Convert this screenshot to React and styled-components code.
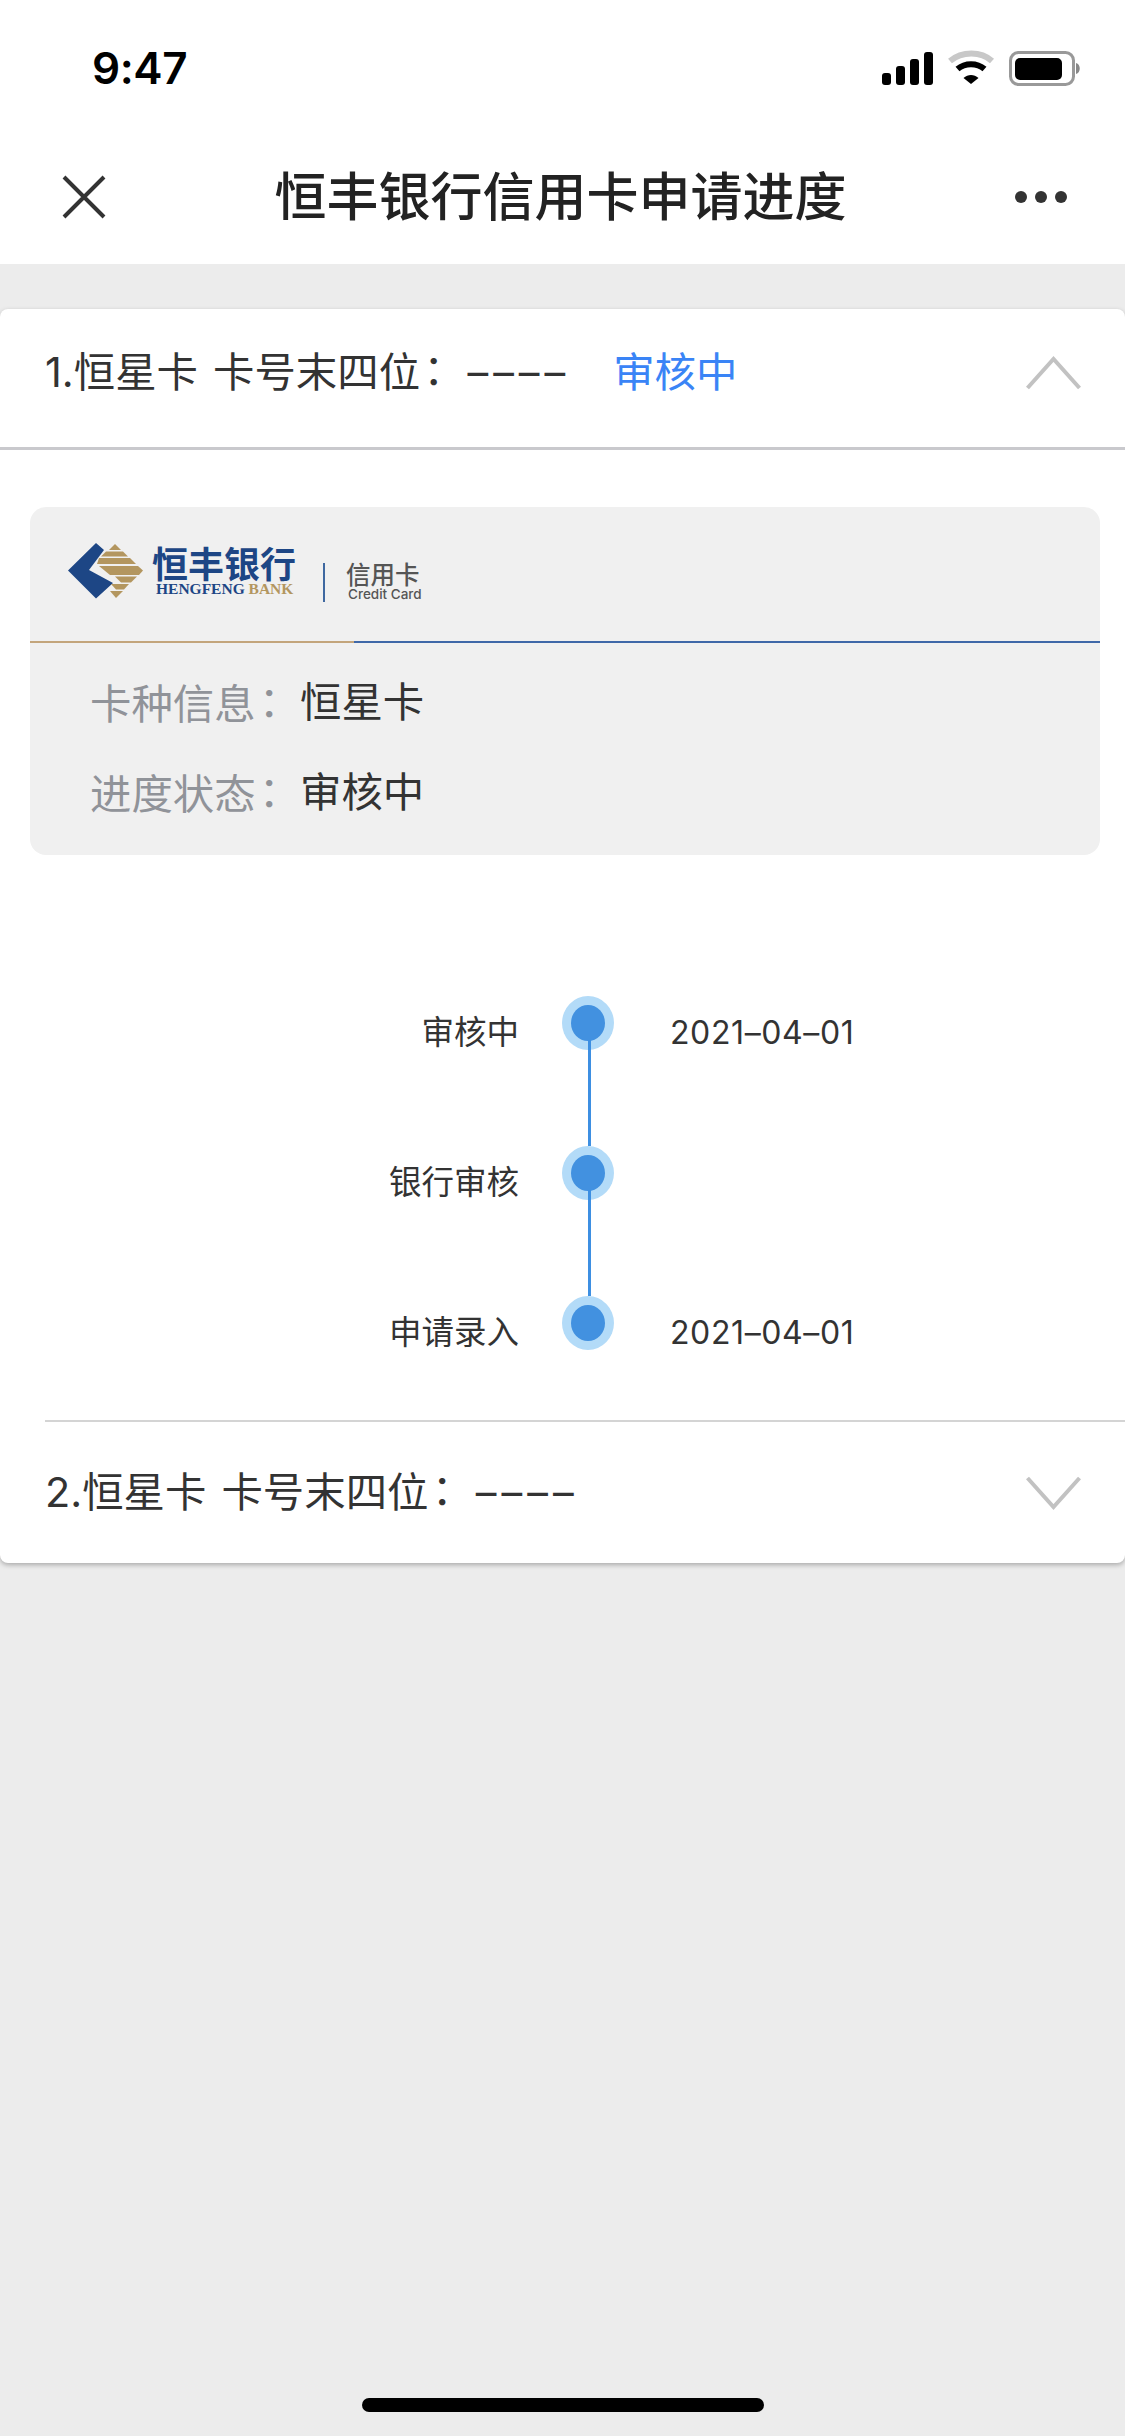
import React from "react";
import styled, { createGlobalStyle } from "styled-components";

const Global = createGlobalStyle`
  html, body { margin: 0; padding: 0; background: #ececec; }
  * { box-sizing: border-box; }
  body { font-family: "Inter", "Noto Sans CJK SC", sans-serif; color: #333; }
`;

const CJK = `"Inter", "Noto Sans CJK SC", sans-serif`;

const Page = styled.div`
  width: 1125px;
  height: 2436px;
  display: flex;
  flex-direction: column;
  background: #ececec;
  overflow: hidden;
`;
const StatusBar = styled.div`
  height: 130px;
  background: #fff;
  display: flex;
  align-items: flex-start;
  justify-content: space-between;
  padding: 42px 43px 0 92px;
`;
const Clock = styled.div`
  font: 600 44px/52px "Inter", sans-serif;
  color: #000;
  letter-spacing: -0.4px;
`;
const StatusIcons = styled.svg`
  width: 200px;
  height: 40px;
  margin-top: 10px;
  overflow: visible;
`;
const NavBar = styled.header`
  height: 134px;
  background: #fff;
  display: grid;
  grid-template-columns: 118px 1fr 122px;
  align-items: center;
  margin-bottom: 45px;
`;
const NavTitle = styled.h1`
  margin: 0;
  padding-top: 2px;
  text-align: center;
  font: 500 52px/64px ${CJK};
  color: #222;
`;
const CloseWrap = styled.div`
  padding-left: 62px;
  display: flex;
`;
const MoreWrap = styled.div`
  display: flex;
  justify-content: flex-end;
  gap: 8px;
  padding-right: 58px;
`;
const MoreDot = styled.span`
  width: 12px;
  height: 12px;
  border-radius: 50%;
  background: #333;
`;
const Panel = styled.section`
  background: #fff;
  border-radius: 8px;
  box-shadow: 0 2px 5px rgba(0, 0, 0, 0.28);
  display: flex;
  flex-direction: column;
`;
const Head = styled.div`
  height: ${(p) => p.$h}px;
  padding: 0 44px ${(p) => (p.$line ? 10 : 0)}px 45px;
  display: flex;
  align-items: center;
  border-bottom: ${(p) => (p.$line ? "3px solid #c9c9cd" : "none")};
`;
const HeadText = styled.div`
  flex: 1;
  padding-bottom: 5px;
  font: 400 41.4px/56px ${CJK};
  color: #333;
  white-space: pre;
  word-spacing: 3.5px;
`;
const Colon = styled.span`
  font-family: "Noto Sans CJK TC", sans-serif;
  margin-left: -7px;
  margin-right: 7px;
`;
const Dashes = styled.span`
  letter-spacing: 5px;
  margin-left: 6px;
`;
const Status = styled.span`
  color: #3a84f6;
  margin-left: 43px;
`;
const Info = styled.div`
  margin: 57px 25px 0 30px;
  height: 348px;
  background: #f0f0f0;
  border-radius: 16px;
  overflow: hidden;
`;
const LogoBand = styled.div`
  height: 134px;
  padding: 36px 0 0 38px;
  display: flex;
  align-items: flex-start;
`;
const LogoMark = styled.svg`
  width: 76px;
  height: 56px;
  flex: none;
`;
const LogoNames = styled.div`
  margin-left: 8px;
  display: flex;
  flex-direction: column;
  margin-top: -1px;
`;
const LogoCn = styled.div`
  font: 700 36px/40px "Noto Sans CJK SC", sans-serif;
  color: #1d4685;
  white-space: nowrap;
`;
const LogoEn = styled.div`
  font: 700 15.5px/14px "Liberation Serif", serif;
  color: #1d4685;
  margin-left: 4px;
  white-space: pre;
`;
const LogoGold = styled.span`
  color: #b3965f;
`;
const LogoBar = styled.div`
  width: 2px;
  height: 39px;
  background: #3f68a0;
  margin: 20px 21px 0 27px;
`;
const LogoSub = styled.div`
  display: flex;
  flex-direction: column;
  margin-top: 17px;
`;
const SubCn = styled.div`
  font: 500 24.5px/28px "Noto Sans CJK SC", sans-serif;
  color: #555;
  white-space: nowrap;
`;
const SubEn = styled.div`
  font: 500 13.5px/13px "Inter", sans-serif;
  color: #555;
  margin-left: 2px;
  white-space: nowrap;
`;
const Rule = styled.div`
  height: 2px;
  background: linear-gradient(to right, #c3a57c 0, #c3a57c 324px, #3f68a8 324px, #3f68a8 100%);
`;
const Facts = styled.div`
  padding: 14px 0 0 60px;
  display: flex;
  flex-direction: column;
`;
const Fact = styled.div`
  height: 90px;
  display: flex;
  align-items: center;
  font: 400 41.4px/56px ${CJK};
`;
const FactLabel = styled.span`
  width: 210px;
  color: #909399;
`;
const FactValue = styled.span`
  color: #333;
`;
const Timeline = styled.div`
  margin-top: 93px;
  margin-bottom: 22px;
  display: flex;
  flex-direction: column;
`;
const Step = styled.div`
  height: 150px;
  display: grid;
  grid-template-columns: 518px 52px 1fr;
  column-gap: 44px;
  align-items: center;
`;
const StepLabel = styled.div`
  text-align: right;
  margin-right: -1px;
  padding-top: 19px;
  font: 400 32.5px/42px ${CJK};
  color: #333;
`;
const Ring = styled.div`
  position: relative;
  width: 52px;
  height: 54px;
  border-radius: 50%;
  background: #b3dbf8;
  display: flex;
  align-items: center;
  justify-content: center;
`;
const Core = styled.div`
  width: 34px;
  height: 36px;
  border-radius: 50%;
  background: #4291e0;
`;
const Connector = styled.div`
  position: absolute;
  left: 26px;
  top: 44px;
  width: 3px;
  height: 106px;
  background: #3d8fe2;
`;
const StepDate = styled.div`
  margin-left: 12px;
  padding-top: 19px;
  font: 400 32px/42px "Inter", sans-serif;
  letter-spacing: 0.6px;
  color: #333;
`;
const Divider = styled.div`
  height: 2px;
  margin-left: 45px;
  background: #d4d4d4;
`;
const HomeBar = styled.div`
  position: absolute;
  left: 362px;
  top: 2398px;
  width: 402px;
  height: 14px;
  border-radius: 7px;
  background: #000;
`;

const Chevron = ({ up }) => (
  <svg width="55" height="34" viewBox="0 0 55 34" fill="none" style={{ display: "block" }}>
    <path
      d={up ? "M1.5 32 L27.5 3 L53.5 32" : "M1.5 2 L27.5 31 L53.5 2"}
      stroke="#c2c2c2"
      strokeWidth="4"
    />
  </svg>
);

const steps = [
  { label: "审核中", date: "2021–04–01", line: true },
  { label: "银行审核", date: "", line: true },
  { label: "申请录入", date: "2021–04–01", line: false },
];

export default function App() {
  return (
    <Page>
      <Global />
      <StatusBar>
        <Clock>9:47</Clock>
        <StatusIcons viewBox="0 0 200 40">
          <g fill="#000">
            <rect x="0" y="21" width="9" height="12" rx="3" />
            <rect x="14" y="14" width="9" height="19" rx="3" />
            <rect x="28" y="7" width="9" height="26" rx="3" />
            <rect x="42" y="0" width="9" height="33" rx="3" />
          </g>
          <path d="M68 9 C80 -1 99 -1 110 9" fill="none" stroke="#c8c8c8" strokeWidth="6" />
          <path d="M75.5 17 C83 10.5 95 10.5 102.5 17" fill="none" stroke="#000" strokeWidth="6" />
          <path d="M81.5 26 L89 32 L96.5 26 C92 22 86 22 81.5 26 Z" fill="#000" />
          <rect x="128.5" y="0.5" width="63" height="32" rx="8" fill="none" stroke="#999" strokeWidth="3" />
          <rect x="133" y="6" width="47" height="22" rx="5" fill="#000" />
          <path d="M194 11 C199 12 199 21 194 22 Z" fill="#888" />
        </StatusIcons>
      </StatusBar>
      <NavBar>
        <CloseWrap>
          <svg width="44" height="44" viewBox="0 0 44 44" style={{ display: "block" }}>
            <path d="M2 2 L42 42 M42 2 L2 42" stroke="#333" strokeWidth="4" fill="none" />
          </svg>
        </CloseWrap>
        <NavTitle>恒丰银行信用卡申请进度</NavTitle>
        <MoreWrap>
          <MoreDot />
          <MoreDot />
          <MoreDot />
        </MoreWrap>
      </NavBar>
      <Panel>
        <Head $h={141} $line>
          <HeadText>
            1.恒星卡 卡号末四位<Colon>：</Colon>
            <Dashes>––––</Dashes>
            <Status>审核中</Status>
          </HeadText>
          <Chevron up />
        </Head>
        <Info>
          <LogoBand>
            <LogoMark viewBox="0 0 76 56">
              <path d="M0 27.5 L28 0 L36 7 L21 27 L45 40 L28 55.5 Z" fill="#1d4685" />
              <g fill="#b3965f">
                <path d="M47 1 L53 7 L41 7 Z" />
                <path d="M38 8.5 L55 8.5 L60 13.5 L33 13.5 Z" />
                <path d="M31 15 L62 15 L68 21 L29 21 Z" />
                <path d="M31 23 L70 23 L75 27.5 L71 32 L42 32 Z" />
                <path d="M47 33.5 L69 33.5 L63 39.5 L53 39.5 Z" />
                <path d="M43 41 L61 41 L56 46.5 L48 46.5 Z" />
                <path d="M42 48 L55 48 L48 55 Z" />
              </g>
            </LogoMark>
            <LogoNames>
              <LogoCn>恒丰银行</LogoCn>
              <LogoEn>
                HENGFENG <LogoGold>BANK</LogoGold>
              </LogoEn>
            </LogoNames>
            <LogoBar />
            <LogoSub>
              <SubCn>信用卡</SubCn>
              <SubEn>Credit Card</SubEn>
            </LogoSub>
          </LogoBand>
          <Rule />
          <Facts>
            <Fact>
              <FactLabel>卡种信息<Colon>：</Colon></FactLabel>
              <FactValue>恒星卡</FactValue>
            </Fact>
            <Fact>
              <FactLabel>进度状态<Colon>：</Colon></FactLabel>
              <FactValue>审核中</FactValue>
            </Fact>
          </Facts>
        </Info>
        <Timeline>
          {steps.map((s) => (
            <Step key={s.label}>
              <StepLabel>{s.label}</StepLabel>
              <Ring>
                <Core />
                {s.line && <Connector />}
              </Ring>
              <StepDate>{s.date}</StepDate>
            </Step>
          ))}
        </Timeline>
        <Divider />
        <Head $h={141}>
          <HeadText>
            2.恒星卡 卡号末四位<Colon>：</Colon>
            <Dashes>––––</Dashes>
          </HeadText>
          <Chevron />
        </Head>
      </Panel>
      <HomeBar />
    </Page>
  );
}
